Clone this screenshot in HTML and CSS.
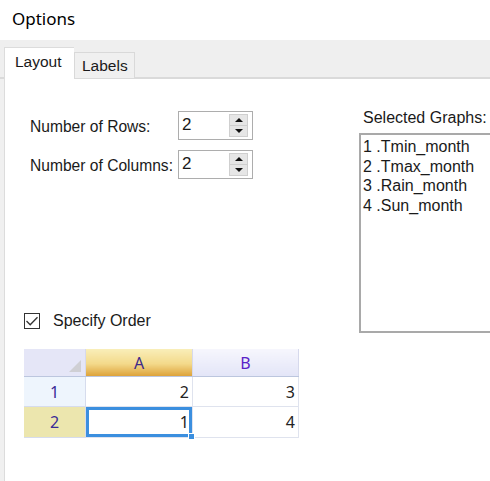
FILE: index.html
```html
<!DOCTYPE html>
<html lang="en">
<head>
  <meta charset="UTF-8">
  <title>Options</title>
  <link rel="stylesheet" href="styles.css">
</head>
<body>
  <div class="window">
    <div class="title">Options</div>
    <div class="tabs">
      <div class="tab active">Layout</div>
      <div class="tab">Labels</div>
    </div>
    <div class="panel">
      <div class="left">
        <div class="field">
          <label>Number of Rows:</label>
          <div class="spin">
            <span class="value">2</span>
            <span class="spin-btns"><span class="up"></span><span class="down"></span></span>
          </div>
        </div>
        <div class="field">
          <label>Number of Columns:</label>
          <div class="spin">
            <span class="value">2</span>
            <span class="spin-btns"><span class="up"></span><span class="down"></span></span>
          </div>
        </div>

        <div class="check-row">
          <span class="check">
            <svg width="14" height="14" viewBox="0 0 14 14"><path d="M1.5 7 L5.2 10.7 L12.5 3.2" fill="none" stroke="#333" stroke-width="1.3"/></svg>
          </span>
          <span>Specify Order</span>
        </div>

        <table class="grid">
          <thead>
            <tr>
              <th class="corner"><span class="tri"></span></th>
              <th class="col-sel">A</th>
              <th>B</th>
            </tr>
          </thead>
          <tbody>
            <tr>
              <th class="rowhead">1</th>
              <td>2</td>
              <td>3</td>
            </tr>
            <tr>
              <th class="rowhead row-sel">2</th>
              <td class="cell-sel">1<span class="handle"></span></td>
              <td>4</td>
            </tr>
          </tbody>
        </table>
      </div>

      <div class="right">
        <div class="list-label">Selected Graphs:</div>
        <ul class="listbox">
          <li>1 .Tmin_month</li>
          <li>2 .Tmax_month</li>
          <li>3 .Rain_month</li>
          <li>4 .Sun_month</li>
        </ul>
      </div>
    </div>
  </div>
</body>
</html>
```

FILE: styles.css
```css
html, body {
  margin: 0;
  padding: 0;
}
body {
  width: 490px;
  height: 481px;
  overflow: hidden;
  background: #ffffff;
  font-family: "Liberation Sans", Arial, sans-serif;
  font-size: 16px;
  color: #1a1a1a;
}

/* Window title */
.title {
  height: 40px;
  box-sizing: border-box;
  padding: 7px 0 0 12px;
  font-family: "Noto Sans", "Liberation Sans", sans-serif;
  font-size: 17px;
  color: #000;
}

/* Tab strip */
.tabs {
  display: flex;
  align-items: flex-end;
  height: 39px;
  box-sizing: border-box;
  background: #efefef;
  padding-left: 4px;
  border-bottom: 2px solid #dadada;
  font-size: 15.5px;
}
.tab {
  height: 26px;
  box-sizing: border-box;
  padding: 4px 6px 0 7px;
  margin-bottom: -1px;
  background: #f0f0f0;
  border: 1px solid #d9d9d9;
  border-bottom: none;
  color: #1a1a1a;
}
.tab.active {
  height: 32px;
  width: 70px;
  padding: 5px 0 0 10px;
  margin-bottom: -2px;
  background: #ffffff;
  border-color: #dcdcdc;
  border-right: none;
}

/* Panel content */
.panel {
  display: flex;
  height: 402px;
  margin-left: 4px;
  border-left: 1px solid #dcdcdc;
  box-shadow: -4px 0 0 #f0f0f0;
  padding: 32px 0 0 19px;
  box-sizing: border-box;
  overflow: hidden;
}
.left {
  width: 316px;
  flex-shrink: 0;
}
.field {
  display: flex;
  align-items: center;
  margin-left: 6px;
  height: 29px;
  margin-bottom: 10px;
}
.field label {
  width: 148px;
  padding-top: 2px;
  font-size: 15.6px;
}
.spin {
  display: flex;
  width: 75px;
  height: 29px;
  box-sizing: border-box;
  border: 1px solid #adadad;
  background: #fff;
}
.spin .value {
  flex: 1;
  font-size: 17px;
  line-height: 25px;
  padding-left: 3px;
}
.spin-btns {
  display: flex;
  flex-direction: column;
  width: 19px;
  margin: 2px 4px 2px 0;
}
.spin-btns span {
  flex: 1;
  background: #e6e6e6;
  border: 1px solid #cfcfcf;
  display: flex;
  align-items: center;
  justify-content: center;
}
.spin-btns .down {
  border-top: none;
}
.spin-btns .up::after {
  content: "";
  border-left: 4px solid transparent;
  border-right: 4px solid transparent;
  border-bottom: 4px solid #111;
}
.spin-btns .down::after {
  content: "";
  border-left: 4px solid transparent;
  border-right: 4px solid transparent;
  border-top: 4px solid #111;
}

/* Checkbox */
.check-row {
  display: flex;
  align-items: center;
  gap: 13px;
  margin-top: 133px;
  height: 18px;
}
.check {
  width: 16px;
  height: 16px;
  box-sizing: border-box;
  border: 1px solid #333;
  display: flex;
  align-items: center;
  justify-content: center;
}

/* Order grid */
.grid {
  margin-top: 19px;
  border-collapse: collapse;
  font-family: "Noto Sans", "Liberation Sans", sans-serif;
  font-size: 16px;
}
.grid th {
  font-weight: normal;
  color: #3a2a96;
  text-align: center;
  padding: 0;
}
.grid thead th {
  height: 27px;
  width: 105px;
  background: linear-gradient(#f6f6fd, #e3e5f7);
  border-right: 1px solid #d6d9ec;
  border-bottom: 1px solid #bcc6de;
  color: #5a22c8;
}
.grid th.corner {
  width: 61px;
  position: relative;
  background: #e5e6f7;
}
.grid .tri {
  position: absolute;
  right: 4px;
  bottom: 4px;
  border-left: 12px solid transparent;
  border-bottom: 12px solid #cfcfd4;
}
.grid th.col-sel {
  width: 106px;
  background: linear-gradient(#f9eeb9, #f3d98a 55%, #dda23a);
  color: #3d2a8a;
}
.grid .rowhead {
  background: #eef5fd;
  border-bottom: 1px solid #d6dced;
  border-right: 1px solid #d6dced;
}
.grid .rowhead.row-sel {
  background: #ece6ae;
}
.grid td {
  height: 29px;
  text-align: right;
  padding: 0 3px 0 0;
  border-right: 1px solid #dfe3ee;
  border-bottom: 1px solid #dfe3ee;
  color: #222;
}
.grid tbody tr:last-child td,
.grid tbody tr:last-child th {
  height: 30px;
}
.grid td.cell-sel {
  position: relative;
  box-shadow: inset 0 0 0 3px #3b8fdf;
}
.grid .handle {
  position: absolute;
  right: -3px;
  bottom: -3px;
  width: 5px;
  height: 5px;
  background: #3b8fdf;
  border: 1px solid #fff;
}

/* Selected graphs list */
.right {
  flex: 1;
  min-width: 0;
  margin-left: 19px;
}
.list-label {
  padding-left: 4px;
  height: 23px;
  line-height: 16px;
  margin-top: -1px;
}
.listbox {
  list-style: none;
  margin: 0;
  height: 200px;
  box-sizing: border-box;
  border: 2px solid #a9a9a9;
  border-right: none;
  padding: 2px 0 0 2px;
}
.listbox li {
  line-height: 19.5px;
  white-space: nowrap;
}
```
